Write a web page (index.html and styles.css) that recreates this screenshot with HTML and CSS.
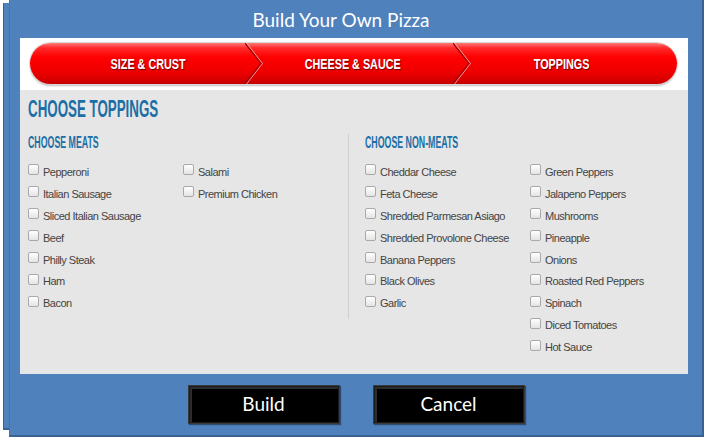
FILE: index.html
```html
<!DOCTYPE html>
<html>
<head>
<meta charset="utf-8">
<link rel="stylesheet" href="styles.css">
</head>
<body>
<div class="stage">
  <div class="window">
    <div class="title">Build Your Own Pizza</div>
    <div class="content">
      <div class="steps-wrap">
        <div class="steps">
          <div class="step step-1"><span class="step-text">SIZE &amp; CRUST</span></div>
          <div class="sep"><svg width="18" height="41" viewBox="0 0 18 41"><polyline points="0,0 16,20.5 0,41" fill="none" stroke="#a80000" stroke-width="1.5"/><polyline points="1.5,0 17.5,20.5 1.5,41" fill="none" stroke="rgba(235,200,200,0.75)" stroke-width="1"/></svg></div>
          <div class="step step-2"><span class="step-text">CHEESE &amp; SAUCE</span></div>
          <div class="sep"><svg width="18" height="41" viewBox="0 0 18 41"><polyline points="0,0 16,20.5 0,41" fill="none" stroke="#a80000" stroke-width="1.5"/><polyline points="1.5,0 17.5,20.5 1.5,41" fill="none" stroke="rgba(235,200,200,0.75)" stroke-width="1"/></svg></div>
          <div class="step step-3"><span class="step-text">TOPPINGS</span></div>
        </div>
      </div>
      <div class="panel">
        <h1 class="h-main"><span class="cond cond-main">CHOOSE TOPPINGS</span></h1>
        <div class="groups">
          <div class="group meats">
            <h2 class="h-sub"><span class="cond cond-sub">CHOOSE MEATS</span></h2>
            <div class="cols">
              <ul class="col col-meat">
                <li><input type="checkbox" class="cb"><span>Pepperoni</span></li>
                <li><input type="checkbox" class="cb"><span>Italian Sausage</span></li>
                <li><input type="checkbox" class="cb"><span>Sliced Italian Sausage</span></li>
                <li><input type="checkbox" class="cb"><span>Beef</span></li>
                <li><input type="checkbox" class="cb"><span>Philly Steak</span></li>
                <li><input type="checkbox" class="cb"><span>Ham</span></li>
                <li><input type="checkbox" class="cb"><span>Bacon</span></li>
              </ul>
              <ul class="col">
                <li><input type="checkbox" class="cb"><span>Salami</span></li>
                <li><input type="checkbox" class="cb"><span>Premium Chicken</span></li>
              </ul>
            </div>
          </div>
          <div class="group nonmeats">
            <h2 class="h-sub"><span class="cond cond-sub">CHOOSE NON-MEATS</span></h2>
            <div class="cols">
              <ul class="col col-non">
                <li><input type="checkbox" class="cb"><span>Cheddar Cheese</span></li>
                <li><input type="checkbox" class="cb"><span>Feta Cheese</span></li>
                <li><input type="checkbox" class="cb"><span>Shredded Parmesan Asiago</span></li>
                <li><input type="checkbox" class="cb"><span>Shredded Provolone Cheese</span></li>
                <li><input type="checkbox" class="cb"><span>Banana Peppers</span></li>
                <li><input type="checkbox" class="cb"><span>Black Olives</span></li>
                <li><input type="checkbox" class="cb"><span>Garlic</span></li>
              </ul>
              <ul class="col">
                <li><input type="checkbox" class="cb"><span>Green Peppers</span></li>
                <li><input type="checkbox" class="cb"><span>Jalapeno Peppers</span></li>
                <li><input type="checkbox" class="cb"><span>Mushrooms</span></li>
                <li><input type="checkbox" class="cb"><span>Pineapple</span></li>
                <li><input type="checkbox" class="cb"><span>Onions</span></li>
                <li><input type="checkbox" class="cb"><span>Roasted Red Peppers</span></li>
                <li><input type="checkbox" class="cb"><span>Spinach</span></li>
                <li><input type="checkbox" class="cb"><span>Diced Tomatoes</span></li>
                <li><input type="checkbox" class="cb"><span>Hot Sauce</span></li>
              </ul>
            </div>
          </div>
        </div>
      </div>
    </div>
    <div class="actions">
      <button class="btn">Build</button>
      <button class="btn">Cancel</button>
    </div>
  </div>
</div>
</body>
</html>
```
FILE: styles.css
```css
html, body {
  margin: 0;
  padding: 0;
  background: #ffffff;
}
.stage {
  position: relative;
  width: 715px;
  height: 443px;
}
.stage::before {
  content: "";
  position: absolute;
  left: 3px;
  top: 3px;
  width: 680px;
  height: 425px;
  background: #4f81bd;
  border-left: 1px solid #3a6291;
  border-bottom: 2px solid #3a6291;
}
.window {
  position: relative;
  margin-left: 9px;
  width: 692px;
  height: 435px;
  background: #4f81bd;
  border-right: 2px solid #3b6190;
  border-bottom: 2px solid #3b6190;
  border-left: 1px solid #46739f;
  display: flex;
  flex-direction: column;
  box-sizing: content-box;
}
.title {
  height: 38px;
  line-height: 40px;
  text-align: center;
  padding-right: 30px;
  color: #ffffff;
  font-family: Lato, "Open Sans", sans-serif;
  font-size: 19px;
}
.content {
  margin: 0 14px 0 10px;
  height: 336px;
  display: flex;
  flex-direction: column;
}
.steps-wrap {
  height: 52px;
  background: #ffffff;
  padding: 5px 11px 0 10px;
  box-sizing: border-box;
}
.steps {
  height: 41px;
  border-radius: 21px;
  display: flex;
  background: linear-gradient(to bottom, #ff7a7a 0%, #ff2a2a 12%, #ff0000 35%, #ee0000 70%, #d40000 92%, #c40000 100%);
  box-shadow: 0 0 0 1px #d8d8d8, 0 2px 2px rgba(0,0,0,0.25);
  overflow: hidden;
}
.step {
  display: flex;
  align-items: center;
  justify-content: center;
}
.step-1 {
  flex: 0 0 215px;
  padding-left: 21px;
  box-sizing: border-box;
}
.step-2 {
  flex: 0 0 190px;
  padding-right: 10px;
  box-sizing: border-box;
}
.step-3 {
  flex: 1;
  padding-right: 24px;
}
.sep {
  flex: 0 0 17px;
  height: 41px;
}
.sep svg {
  display: block;
}
.cond {
  display: inline-block;
  font-family: "Liberation Sans", Arial, sans-serif;
  font-weight: bold;
  transform-origin: left center;
  white-space: nowrap;
}
.step-text {
  font-family: "Liberation Sans", Arial, sans-serif;
  font-weight: bold;
  font-size: 15px;
  color: #ffffff;
  text-shadow: 1px 1px 1px rgba(80,0,0,0.9);
  transform: scaleX(0.72);
  white-space: nowrap;
  display: inline-block;
}
.panel {
  flex: 1;
  background: #e6e6e6;
  padding: 6px 0 0 8px;
}
.h-main {
  margin: 0;
  height: 26px;
  line-height: 26px;
  font-size: 23px;
  color: #1b6fa6;
  font-weight: normal;
}
.cond-main {
  transform: scaleX(0.58);
}
.groups {
  display: flex;
  margin-top: 12px;
  align-items: flex-start;
}
.group {
  display: flex;
  flex-direction: column;
}
.meats {
  width: 320px;
  border-right: 1px solid #cfcfcf;
  padding-bottom: 5px;
}
.nonmeats {
  padding-left: 16px;
}
.h-sub {
  margin: 0;
  height: 18px;
  line-height: 18px;
  font-size: 16px;
  color: #1b6fa6;
  font-weight: normal;
}
.cond-sub {
  transform: scaleX(0.55);
}
.cols {
  display: flex;
  margin-top: 9px;
}
.col {
  list-style: none;
  margin: 0;
  padding: 0;
  display: flex;
  flex-direction: column;
}
.col-meat {
  width: 155px;
}
.col-non {
  width: 165px;
}
.col li {
  height: 21.9px;
  display: flex;
  align-items: center;
  gap: 4px;
  font-family: "Liberation Sans", Arial, sans-serif;
  font-size: 11px;
  letter-spacing: -0.5px;
  color: #444444;
}
.cb {
  appearance: none;
  -webkit-appearance: none;
  margin: 0;
  width: 11px;
  height: 11px;
  border: 1px solid #a9a9a9;
  border-radius: 2px;
  background: linear-gradient(#ffffff, #e4e4e4);
  box-sizing: border-box;
  position: relative;
  top: -2px;
}
.actions {
  flex: 1;
  display: flex;
  justify-content: center;
  align-items: flex-start;
  padding-top: 11px;
  gap: 33px;
}
.btn {
  width: 152px;
  height: 39px;
  background: #000000;
  color: #ffffff;
  border: 1px solid #3a3a3a;
  box-shadow: inset 0 0 0 1px #1c1c1c, inset 1px 1px 0 2px #2c2c2c, 1px 1px 1px rgba(0,0,0,0.4);
  font-family: Lato, "Open Sans", sans-serif;
  font-size: 19px;
  padding: 0;
  padding-bottom: 2px;
}
```
